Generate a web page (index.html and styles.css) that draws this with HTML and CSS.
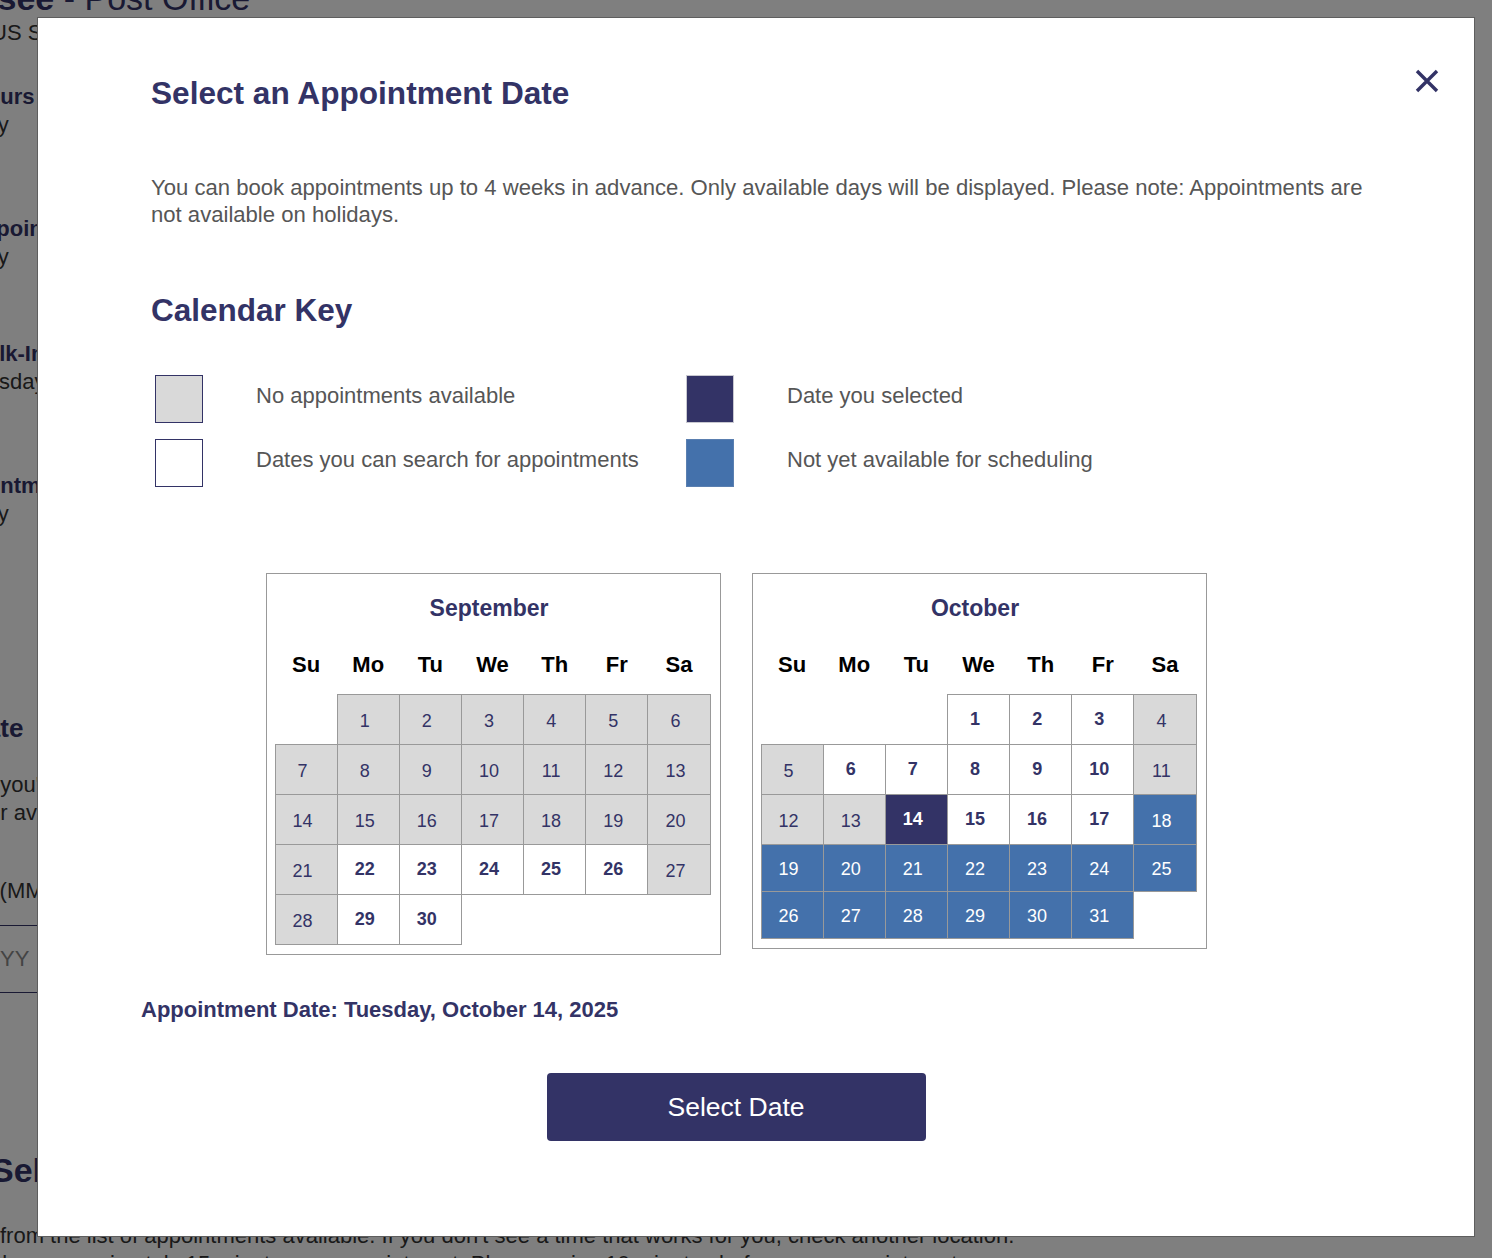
FILE: index.html
```html
<!DOCTYPE html>
<html lang="en">
<head>
<meta charset="utf-8">
<title>Select an Appointment Date</title>
<link rel="stylesheet" href="styles.css">
</head>
<body>
<div class="page">
  <div class="bg-title"><b>Tennessee</b> - Post Office</div>
  <div class="bg-text off-us">US Services</div>
  <div class="bg-h off-hours">Hours</div>
  <div class="bg-text off-today">Today</div>
  <div class="bg-h off-appt gap-1">Appointments</div>
  <div class="bg-text off-today">Today</div>
  <div class="bg-h off-walk gap-2">Walk-In Hours</div>
  <div class="bg-text off-tue">Tuesday</div>
  <div class="bg-h off-appoi gap-1">Appointments</div>
  <div class="bg-text off-today">Today</div>
  <div class="bg-h2 off-date">Date</div>
  <div class="bg-text off-if gap-3">If you'll need a date, choose one</div>
  <div class="bg-text off-for">for available appointments.</div>
  <div class="bg-text off-mm gap-4">Date (MM/DD/YYYY)</div>
  <div class="bg-input">MM/DD/YYYY</div>
  <div class="bg-h3">Select a Time</div>
  <div class="bg-text bg-from">from the list of appointments available. If you don't see a time that works for you, check another location.</div>
  <div class="bg-text bg-from2">takes approximately 15 minutes per appointment. Please arrive 10 minutes before your appointment.</div>
</div>

<div class="overlay"></div>

<div class="modal" role="dialog" aria-label="Select an Appointment Date">
  <button class="close" aria-label="Close">
    <svg width="24" height="24" viewBox="0 0 24 24" aria-hidden="true">
      <path d="M2 2L22 22M22 2L2 22" stroke="#333366" stroke-width="3.4" fill="none"/>
    </svg>
  </button>

  <h1 class="title">Select an Appointment Date</h1>
  <p class="intro">You can book appointments up to 4 weeks in advance. Only available days will be displayed. Please note: Appointments are not available on holidays.</p>

  <h2 class="key-title">Calendar Key</h2>
  <div class="key">
    <div class="key-item"><span class="swatch sw-none"></span><span class="key-label">No appointments available</span></div>
    <div class="key-item"><span class="swatch sw-sel"></span><span class="key-label">Date you selected</span></div>
    <div class="key-item"><span class="swatch sw-open"></span><span class="key-label">Dates you can search for appointments</span></div>
    <div class="key-item"><span class="swatch sw-future"></span><span class="key-label">Not yet available for scheduling</span></div>
  </div>

  <div class="centered calendars">
    <div class="cal">
      <div class="cal-title">September</div>
      <table>
        <thead><tr><th>Su</th><th>Mo</th><th>Tu</th><th>We</th><th>Th</th><th>Fr</th><th>Sa</th></tr></thead>
        <tbody>
          <tr><td class="empty"></td><td class="na">1</td><td class="na">2</td><td class="na">3</td><td class="na">4</td><td class="na">5</td><td class="na">6</td></tr>
          <tr><td class="na">7</td><td class="na">8</td><td class="na">9</td><td class="na">10</td><td class="na">11</td><td class="na">12</td><td class="na">13</td></tr>
          <tr><td class="na">14</td><td class="na">15</td><td class="na">16</td><td class="na">17</td><td class="na">18</td><td class="na">19</td><td class="na">20</td></tr>
          <tr><td class="na">21</td><td class="open">22</td><td class="open">23</td><td class="open">24</td><td class="open">25</td><td class="open">26</td><td class="na">27</td></tr>
          <tr><td class="na">28</td><td class="open">29</td><td class="open">30</td><td class="empty"></td><td class="empty"></td><td class="empty"></td><td class="empty"></td></tr>
        </tbody>
      </table>
    </div>
    <div class="cal">
      <div class="cal-title">October</div>
      <table>
        <thead><tr><th>Su</th><th>Mo</th><th>Tu</th><th>We</th><th>Th</th><th>Fr</th><th>Sa</th></tr></thead>
        <tbody>
          <tr><td class="empty"></td><td class="empty"></td><td class="empty"></td><td class="open">1</td><td class="open">2</td><td class="open">3</td><td class="na">4</td></tr>
          <tr><td class="na">5</td><td class="open">6</td><td class="open">7</td><td class="open">8</td><td class="open">9</td><td class="open">10</td><td class="na">11</td></tr>
          <tr><td class="na">12</td><td class="na">13</td><td class="sel">14</td><td class="open">15</td><td class="open">16</td><td class="open">17</td><td class="future">18</td></tr>
          <tr class="short"><td class="future">19</td><td class="future">20</td><td class="future">21</td><td class="future">22</td><td class="future">23</td><td class="future">24</td><td class="future">25</td></tr>
          <tr class="short"><td class="future">26</td><td class="future">27</td><td class="future">28</td><td class="future">29</td><td class="future">30</td><td class="future">31</td><td class="empty"></td></tr>
        </tbody>
      </table>
    </div>
  </div>

  <div class="appt-date">Appointment Date: Tuesday, October 14, 2025</div>

  <div class="centered">
    <button class="btn">Select Date</button>
  </div>
</div>
</body>
</html>
```

FILE: styles.css
```css
* { box-sizing: border-box; }

html, body {
  margin: 0;
  padding: 0;
  width: 1492px;
  height: 1258px;
  overflow: hidden;
  background: #ffffff;
  font-family: "Liberation Sans", Arial, Helvetica, sans-serif;
}

/* ---------- background page (under overlay) ---------- */
.page {
  width: 1492px;
  height: 1258px;
  overflow: hidden;
  color: #333333;
}

.bg-title {
  font-size: 34px;
  line-height: 40px;
  color: #333366;
  margin: -22px 0 0 -119px;
  white-space: nowrap;
}
.bg-title b { font-weight: 700; }

.bg-text {
  font-size: 22px;
  line-height: 28px;
  color: #333333;
  white-space: nowrap;
}
.bg-h {
  font-size: 22px;
  line-height: 28px;
  font-weight: 700;
  color: #333366;
  white-space: nowrap;
}
.bg-h2 {
  font-size: 26px;
  line-height: 32px;
  font-weight: 700;
  color: #333366;
  margin-top: 184px;
  white-space: nowrap;
}
.bg-h3 {
  font-size: 34px;
  line-height: 40px;
  font-weight: 700;
  color: #333366;
  margin: 157px 0 0 -9px;
  white-space: nowrap;
}

.off-us { margin-left: -9px; margin-top: 1px; }
.off-hours { margin-left: -29px; margin-top: 36px; }
.off-today { margin-left: -50px; }
.off-appt { margin-left: -33px; }
.off-walk { margin-left: -33px; }
.off-tue { margin-left: -38px; }
.off-appoi { margin-left: -62px; }
.off-date { margin-left: -33px; }
.off-if { margin-left: -18px; }
.off-for { margin-left: -18px; }
.off-mm { margin-left: -53px; }
.gap-1 { margin-top: 76px; }
.gap-2 { margin-top: 69px; }
.gap-3 { margin-top: 27px; }
.gap-4 { margin-top: 50px; }

.bg-input {
  margin: 20px 0 0 -110px;
  width: 600px;
  height: 68px;
  border-top: 1px solid #333366;
  border-bottom: 1px solid #333366;
  font-size: 22px;
  line-height: 66px;
  color: #888888;
  white-space: nowrap;
}

.bg-from { margin-top: 32px; }
.bg-from2 { margin-left: -16px; }

.overlay {
  position: fixed;
  inset: 0;
  background: rgba(0, 0, 0, 0.5);
}

/* ---------- modal ---------- */
.modal {
  position: fixed;
  left: 37px;
  top: 17px;
  width: 1438px;
  height: 1220px;
  background: #ffffff;
  border: 1px solid #5e5e5e;
  padding: 55px 115px 0 103px;
}

.close {
  position: absolute;
  top: 51px;
  right: 35px;
  width: 24px;
  height: 24px;
  padding: 0;
  border: 0;
  background: none;
  cursor: pointer;
}
.close svg { display: block; }

.title {
  margin: 0 0 0 10px;
  font-size: 31.6px;
  line-height: 40px;
  font-weight: 700;
  color: #333366;
}

.intro {
  margin: 61px -12px 0 10px;
  font-size: 22.1px;
  line-height: 27px;
  color: #565656;
}

.key-title {
  margin: 62px 0 0 10px;
  font-size: 31.5px;
  line-height: 40px;
  font-weight: 700;
  color: #333366;
}

.key {
  margin: 45px 0 0 14px;
  display: grid;
  grid-template-columns: 531px auto;
  row-gap: 16px;
}
.key-item {
  display: flex;
  align-items: flex-start;
  gap: 53px;
}
.swatch {
  flex: none;
  width: 48px;
  height: 48px;
  border: 1px solid #333366;
}
.sw-none { background: #d9d9d9; }
.sw-open { background: #ffffff; }
.sw-sel { background: #333366; border-color: #c8c8d0; }
.sw-future { background: #4471ab; border-color: #5a7fb0; }
.key-label {
  padding-top: 7px;
  font-size: 22px;
  line-height: 27px;
  color: #565656;
}

.centered {
  width: 1190px;
  display: flex;
  justify-content: center;
}

.calendars {
  margin-top: 86px;
  gap: 31px;
  align-items: flex-start;
}

.cal {
  width: 455px;
  border: 1px solid #999999;
  padding: 0 9px 9px 8px;
}
.cal-title {
  padding: 19px 7px 0 0;
  font-size: 23px;
  line-height: 30px;
  font-weight: 700;
  color: #333366;
  text-align: center;
}

table {
  width: 436px;
  table-layout: fixed;
  border-collapse: collapse;
}
th {
  padding: 30px 0 17px;
  font-size: 22px;
  line-height: 24px;
  font-weight: 700;
  color: #000000;
  text-align: center;
}
td {
  height: 50px;
  padding: 0 7px 0 0;
  border: 1px solid #999999;
  text-align: center;
  vertical-align: middle;
  font-size: 18px;
  color: #333366;
}
tr.short td { height: 47px; }
td.empty { border: none; }
td.na { background: #d9d9d9; padding-top: 4px; }
td.open { background: #ffffff; font-weight: 700; }
td.sel { background: #333366; color: #ffffff; font-weight: 700; }
td.future { background: #4471ab; color: #ffffff; padding-top: 3px; }

.appt-date {
  margin-top: 41px;
  font-size: 22px;
  line-height: 27px;
  font-weight: 700;
  color: #333366;
}

.btn {
  margin-top: 50px;
  width: 379px;
  height: 68px;
  border: 0;
  border-radius: 4px;
  background: #333366;
  color: #ffffff;
  font-family: "Liberation Sans", Arial, Helvetica, sans-serif;
  font-size: 26.5px;
  cursor: pointer;
}
```
